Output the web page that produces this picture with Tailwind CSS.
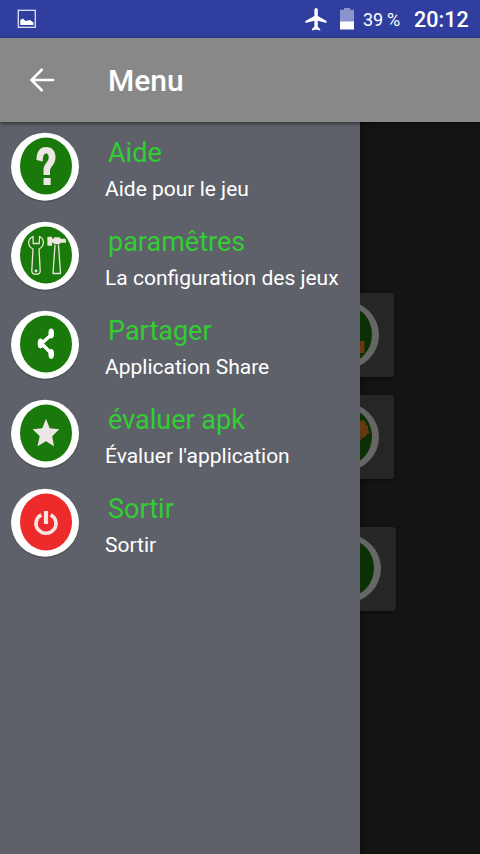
<!DOCTYPE html>
<html lang="fr">
<head>
<meta charset="utf-8">
<title>Menu</title>
<script src="https://cdn.jsdelivr.net/npm/@tailwindcss/browser@4"></script>
</head>
<body class="w-[480px] h-[854px] overflow-hidden flex flex-col bg-[#141414] font-[Roboto,sans-serif] text-white">
<div class="h-[38px] shrink-0 bg-[#303f9f] flex items-center">
  <svg class="ml-[17px] w-5 h-5" viewBox="0 0 20 20"><rect x="1.300" y="1.300" width="17" height="17" fill="none" stroke="#dfe2f5" stroke-width="1.300"/><path d="M3.300 16V11L6 9.500L8.500 12L13 11L16.500 13.500V16Z" fill="#fff"/></svg>
  <svg class="ml-[267px] w-6 h-6" viewBox="0 0 24 24"><path fill="#fff" d="M22.500 16v-2l-8.700-5V3c0-1.200-.8-2-1.700-2s-1.700.8-1.700 2v6l-9 5v2l9-2.300v6L7.900 21.900v1.500l4.200-1 4.100 1v-1.500l-2.400-2.200v-6z"/></svg>
  <svg class="ml-[12px] w-[14px] h-[22px]" viewBox="0 0 14 22"><path fill="#8d93cd" d="M0 1.800h4V0h6v1.800h4v12.200H0z"/><path fill="#fff" d="M0 13.500h14v8H0z"/></svg>
  <span class="ml-[9px] text-[18px] leading-[38px] whitespace-nowrap pt-[2px] tracking-[-0.2px]">39 %</span>
  <span class="ml-[14px] text-[21.500px] text-[21.5px] leading-[38px] font-medium pt-[2px]">20:12</span>
</div>
<header class="h-[84px] shrink-0 bg-[#888] flex items-center shadow-[0_1px_4px_rgba(0,0,0,0.6)] z-10">
  <svg class="ml-[29px] w-[26px] h-[26px]" viewBox="0 0 26 26"><path d="M25 13H3M13.500 2L2.500 13L13.500 24" fill="none" stroke="#fff" stroke-width="2.600"/></svg>
  <h1 class="ml-[53px] pt-[2px] text-[30px] font-medium leading-none">Menu</h1>
</header>
<div class="flex grow min-h-0">
  <nav class="w-[360px] shrink-0 bg-[#5e6169]">
    <a class="flex h-[89px]">
      <svg class="w-[90px] h-[89px] shrink-0" viewBox="0 0 90 89"><circle cx="45" cy="46" r="34.300" fill="#505359"/><circle cx="45" cy="44.700" r="34" fill="#fff"/><ellipse cx="46" cy="44" rx="26" ry="28.500" fill="#19790a"/><path d="M36.500 38C36.500 29.500 40 25 46 25C52 25 55.500 29 55.500 35C55.500 43 50 44.500 50 49V53H43.500V48C43.500 42 48.700 40 48.700 35.500C48.700 33 47.800 31.500 46 31.500C43.800 31.500 43 34 42.700 39.500Z" fill="#eee5e5"/><path d="M43.500 56h7.200v7h-7.200z" fill="#eee5e5"/></svg>
      <span class="flex flex-col pt-[13px] pl-[15px]"><b class="pl-[3px] text-[27px] leading-9 font-normal text-[#32cd32]">Aide</b><span class="text-[21px] leading-9 whitespace-nowrap">Aide pour le jeu</span></span>
    </a>
    <a class="flex h-[89px]">
      <svg class="w-[90px] h-[89px] shrink-0" viewBox="0 0 90 89"><circle cx="45" cy="46" r="34.300" fill="#505359"/><circle cx="45" cy="44.700" r="34" fill="#fff"/><ellipse cx="46" cy="44" rx="26" ry="28.500" fill="#19790a"/><g stroke="#e6e6d8" stroke-width="1.300" stroke-linejoin="round" fill="none"><path d="M33 25.500C27 28 27.500 35.500 33 38L31.800 60C32 64.500 40 64.500 40.200 60L39 38C44.500 35.500 45 28 39.500 25.500L39.300 32.500H33.200Z"/><path d="M55 34L53 62.500H60.500L58.500 34"/><path fill="#eee5e5" d="M48 26.500h3.500v2h2l1-1.500h5l1 1.500h4.500l.5 2.500h-5l-1 1.500h-5l-1-1.500h-2v3H48z"/></g><circle cx="36" cy="60" r="1.400" fill="#eee5e5"/></svg>
      <span class="flex flex-col pt-[13px] pl-[15px]"><b class="pl-[3px] text-[27px] leading-9 font-normal text-[#32cd32]">paramêtres</b><span class="text-[21px] leading-9 whitespace-nowrap">La configuration des jeux</span></span>
    </a>
    <a class="flex h-[89px]">
      <svg class="w-[90px] h-[89px] shrink-0" viewBox="0 0 90 89"><circle cx="45" cy="46" r="34.300" fill="#505359"/><circle cx="45" cy="44.700" r="34" fill="#fff"/><ellipse cx="46" cy="44" rx="26" ry="28.500" fill="#19790a"/><path d="M51 35L41.500 43.500L51 53" fill="none" stroke="#fff" stroke-width="3.400"/><g fill="#fff"><ellipse cx="51.200" cy="33.500" rx="2.800" ry="4.900"/><ellipse cx="40.500" cy="43.500" rx="2.800" ry="4.900"/><ellipse cx="51.200" cy="54" rx="2.800" ry="4.900"/></g></svg>
      <span class="flex flex-col pt-[13px] pl-[15px]"><b class="pl-[3px] text-[27px] leading-9 font-normal text-[#32cd32]">Partager</b><span class="text-[21px] leading-9 whitespace-nowrap">Application Share</span></span>
    </a>
    <a class="flex h-[89px]">
      <svg class="w-[90px] h-[89px] shrink-0" viewBox="0 0 90 89"><circle cx="45" cy="46" r="34.300" fill="#505359"/><circle cx="45" cy="44.700" r="34" fill="#fff"/><ellipse cx="46" cy="44" rx="26" ry="28.500" fill="#19790a"/><path fill="#eee5e5" d="M46 29.800L49.700 39.300L59.200 40.300L52.200 47.200L54 57.200L46 52.300L37.500 57.200L39.700 47.200L32.700 40.300L42.300 39.300Z"/></svg>
      <span class="flex flex-col pt-[13px] pl-[15px]"><b class="pl-[3px] text-[27px] leading-9 font-normal text-[#32cd32]">évaluer apk</b><span class="text-[21px] leading-9 whitespace-nowrap">Évaluer l'application</span></span>
    </a>
    <a class="flex h-[89px]">
      <svg class="w-[90px] h-[89px] shrink-0" viewBox="0 0 90 89"><circle cx="45" cy="46" r="34.300" fill="#505359"/><circle cx="45" cy="44.700" r="34" fill="#fff"/><ellipse cx="46" cy="44" rx="26" ry="28.500" fill="#ee2b2b"/><path d="M41.300 36.800A10 9.800 0 1 0 50.700 36.800" fill="none" stroke="#f9e4e4" stroke-width="3.600"/><path d="M46 33V46" stroke="#f9e4e4" stroke-width="4.200"/></svg>
      <span class="flex flex-col pt-[13px] pl-[15px]"><b class="pl-[3px] text-[27px] leading-9 font-normal text-[#32cd32]">Sortir</b><span class="text-[21px] leading-9 whitespace-nowrap">Sortir</span></span>
    </a>
  </nav>
  <main class="grow pt-[171px] overflow-hidden shadow-[inset_6px_0_6px_-4px_rgba(0,0,0,0.4)]">
    <div class="w-[34px] h-[84px] bg-[#262626] rounded-r-[3px] shadow-[0_1px_3px_#0a0a0a]"><svg class="w-[34px] h-[84px]" viewBox="0 0 34 84"><circle cx="-15" cy="42" r="34" fill="#666"/><ellipse cx="-14" cy="41.500" rx="26" ry="28.500" fill="#0a3004"/><path fill="#65380f" d="M0 48h4.500v12H0z"/></svg></div>
    <div class="mt-[18px] w-[34px] h-[84px] bg-[#262626] rounded-r-[3px] shadow-[0_1px_3px_#0a0a0a]"><svg class="w-[34px] h-[84px]" viewBox="0 0 34 84"><circle cx="-15" cy="42" r="34" fill="#666"/><ellipse cx="-14" cy="41.500" rx="26" ry="28.500" fill="#0a3004"/><path fill="#65380f" d="M0 26l3-1 2 1 1 4 2 1v4l2 3-3 1-2 3-3 1-2 3z"/></svg></div>
    <div class="mt-[48px] w-[36px] h-[84px] bg-[#262626] rounded-r-[3px] shadow-[0_1px_3px_#0a0a0a]"><svg class="w-[36px] h-[84px]" viewBox="0 0 36 84"><circle cx="-13" cy="41.500" r="34" fill="#666"/><ellipse cx="-12" cy="41" rx="26" ry="28.500" fill="#0a3004"/></svg></div>
  </main>
</div>
</body>
</html>
